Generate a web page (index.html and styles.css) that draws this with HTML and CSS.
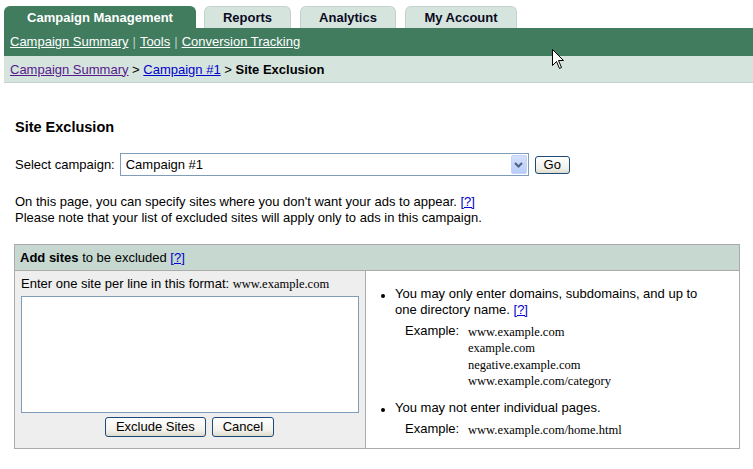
FILE: index.html
```html
<!DOCTYPE html>
<html>
<head>
<meta charset="utf-8">
<link rel="stylesheet" href="styles.css">
</head>
<body>
<div class="tabs">
  <div class="tab active t-campaign">Campaign Management</div>
  <div class="tab t-reports">Reports</div>
  <div class="tab t-analytics">Analytics</div>
  <div class="tab t-account">My Account</div>
</div>
<div class="subnav">
  <a href="#">Campaign Summary</a><span class="sep">|</span><a href="#">Tools</a><span class="sep">|</span><a href="#">Conversion Tracking</a>
</div>
<div class="crumbs">
  <a href="#" class="visited">Campaign Summary</a> &gt; <a href="#">Campaign #1</a> &gt; <b>Site Exclusion</b>
</div>

<div class="content">
  <h1>Site Exclusion</h1>
  <div class="select-row">
    <span>Select campaign:</span>
    <div class="select">
      <span class="select-value">Campaign #1</span>
      <span class="select-btn"><svg width="9" height="6" viewBox="0 0 9 6"><path d="M1 1 L4.5 4.5 L8 1" fill="none" stroke="#4d6185" stroke-width="2"/></svg></span>
    </div>
    <button class="btn go">Go</button>
  </div>
  <p class="intro">On this page, you can specify sites where you don't want your ads to appear. <a href="#">[?]</a><br>Please note that your list of excluded sites will apply only to ads in this campaign.</p>

  <div class="box">
    <div class="box-head"><b>Add sites</b> to be excluded <a href="#">[?]</a></div>
    <div class="box-body">
      <div class="left">
        <div class="hint">Enter one site per line in this format: <span class="serif">www.example.com</span></div>
        <textarea class="sites"></textarea>
        <div class="actions">
          <button class="btn">Exclude Sites</button>
          <button class="btn">Cancel</button>
        </div>
      </div>
      <div class="right">
        <ul class="rules">
          <li>
            <div>You may only enter domains, subdomains, and up to one directory name. <a href="#">[?]</a></div>
            <div class="example">
              <span class="ex-label">Example:</span>
              <div class="serif ex-list">www.example.com<br>example.com<br>negative.example.com<br>www.example.com/category</div>
            </div>
          </li>
          <li>
            <div>You may not enter individual pages.</div>
            <div class="example">
              <span class="ex-label">Example:</span>
              <div class="serif ex-list">www.example.com/home.html</div>
            </div>
          </li>
        </ul>
      </div>
    </div>
  </div>
</div>

<svg class="cursor" width="13" height="21" viewBox="0 0 13 21"><path d="M0.5 0.5 L0.5 16.5 L4.5 12.5 L7.5 19.5 L9.5 18.5 L6.5 11.5 L11.5 11.5 Z" fill="#fff" stroke="#000" stroke-width="1"/></svg>
</body>
</html>
```
FILE: styles.css
```css
html, body {
  margin: 0;
  padding: 0;
  background: #fff;
}
body {
  font-family: "Liberation Sans", Arial, sans-serif;
  font-size: 13px;
  color: #000;
  position: relative;
  width: 753px;
  height: 469px;
  overflow: hidden;
}
a { color: #0000cc; }
a.visited { color: #551a8b; }

.tabs {
  display: flex;
  gap: 8px;
  padding: 6px 0 0 4px;
  height: 22px;
}
.tab {
  box-sizing: border-box;
  height: 22px;
  font-weight: bold;
  font-size: 13px;
  line-height: 22px;
  text-align: center;
  background: #d6e4de;
  border: 1px solid #c3d3cb;
  border-bottom: none;
  border-radius: 6px 6px 0 0;
  color: #0a0a1e;
}
.tab.active {
  background: #417c5f;
  border-color: #417c5f;
  color: #fff;
}
.t-campaign { width: 192px; }
.t-reports { width: 87px; }
.t-analytics { width: 96px; margin-left: 1px; }
.t-account { width: 112px; margin-left: 1px; }

.subnav {
  margin-left: 4px;
  height: 28px;
  background: #417c5f;
  padding-left: 6px;
  display: flex;
  align-items: center;
  padding-bottom: 1px;
  box-sizing: border-box;
}
.subnav a { color: #fff; }
.subnav .sep { color: #b9cfc4; margin: 0 4px; }

.crumbs {
  margin-left: 4px;
  height: 27px;
  box-sizing: border-box;
  background: #d6e4de;
  border-bottom: 1px solid #c2d3cb;
  padding-left: 6px;
  display: flex;
  align-items: center;
  white-space: pre;
}

.content {
  padding-left: 15px;
}
h1 {
  font-size: 14.5px;
  margin: 36px 0 0 0;
  line-height: 17px;
}
.select-row {
  display: flex;
  align-items: center;
  margin-top: 17px;
  height: 23px;
}
.select {
  box-sizing: border-box;
  margin-left: 5px;
  width: 409px;
  height: 23px;
  border: 1px solid #7f9db9;
  display: flex;
  align-items: center;
  justify-content: space-between;
  padding: 0 1px 0 5px;
}
.select-btn {
  width: 16px;
  height: 19px;
  box-sizing: border-box;
  background: linear-gradient(#d3e0fd, #b8cdf9);
  border: 1px solid #c3d3f9;
  border-radius: 2px;
  display: flex;
  align-items: center;
  justify-content: center;
}
.btn {
  font-family: "Liberation Sans", Arial, sans-serif;
  font-size: 13px;
  color: #000;
  background: linear-gradient(#ffffff, #f2f1ea 70%, #dedbcc);
  border: 1px solid #1c4a7a;
  border-radius: 3px;
  height: 20px;
  padding: 0 10px;
  line-height: 16px;
}
.go {
  margin-left: 6px;
  height: 18px;
  width: 35px;
  padding: 0;
}
.intro {
  margin: 18px 0 0 0;
  line-height: 16px;
}

.box {
  margin: 18px 0 0 -1px;
  width: 726px;
  box-sizing: border-box;
  border: 1px solid #ababab;
}
.box-head {
  height: 26px;
  box-sizing: border-box;
  background: #c6d8d0;
  border-bottom: 1px solid #ababab;
  padding-left: 5px;
  display: flex;
  align-items: center;
  white-space: pre;
}
.box-body {
  display: flex;
  height: 177px;
}
.left {
  width: 351px;
  background: #eeeeee;
  border-right: 1px solid #ababab;
  padding: 5px 0 0 6px;
  box-sizing: border-box;
}
.hint { line-height: 16px; }
.serif {
  font-family: "Liberation Serif", "Times New Roman", serif;
  font-size: 12.5px;
}
.sites {
  display: block;
  box-sizing: border-box;
  margin-top: 4px;
  width: 338px;
  height: 117px;
  border: 1px solid #7f9db9;
  resize: none;
  background: #fff;
}
.actions {
  display: flex;
  justify-content: center;
  gap: 6px;
  margin-top: 4px;
  padding-right: 7px;
}
.right {
  flex: 1;
  background: #fff;
  padding: 15px 20px 0 0;
}
.rules {
  margin: 0;
  padding-left: 29px;
  list-style: none;
}
.rules li {
  position: relative;
  line-height: 16px;
  margin-bottom: 11px;
}
.rules li::before {
  content: "";
  position: absolute;
  left: -14px;
  top: 8px;
  width: 4px;
  height: 4px;
  border-radius: 50%;
  background: #000;
}
.example {
  display: flex;
  margin-top: 5px;
  padding-left: 10px;
}
.ex-label { width: 63px; }
.ex-list { line-height: 16.3px; padding-top: 1px; }

.cursor {
  position: absolute;
  left: 552px;
  top: 49px;
}
```
